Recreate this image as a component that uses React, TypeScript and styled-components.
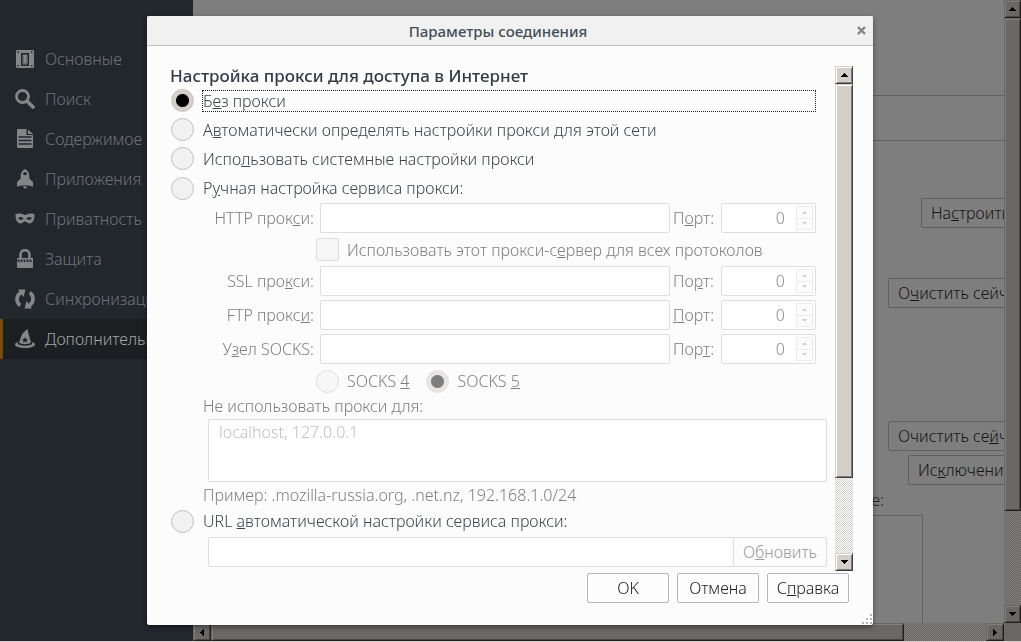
import React, { useState } from 'react';
import type { ReactNode } from 'react';
import styled, { createGlobalStyle, css } from 'styled-components';

const GlobalStyle = createGlobalStyle`
  *, *::before, *::after { box-sizing: border-box; }
  html, body, #root { height: 100%; }
  body { margin: 0; overflow: hidden; background: #d4d0c8; }
  body, button, input, textarea {
    font-family: "Noto Sans", "Open Sans", sans-serif;
    font-size: 16px;
    font-weight: 300;
    line-height: 20px;
  }
`;

/* ---------- page behind the dialog ---------- */

const Page = styled.div`
  display: grid;
  grid-template-columns: 193px minmax(0, 1fr);
  grid-template-rows: minmax(0, 1fr);
  height: 100%;
  padding-bottom: 1px;
`;

const Sidebar = styled.nav`
  padding-top: 39px;
  background: #22272e;
  overflow: hidden;
`;

const NavItem = styled.a<{ $active?: boolean }>`
  display: flex;
  align-items: center;
  gap: 10px;
  height: 40px;
  padding-left: 12px;
  border-left: 3px solid ${p => (p.$active ? '#7f4a00' : 'transparent')};
  background: ${p => (p.$active ? '#1b1f22' : 'transparent')};
  color: ${p => (p.$active ? '#a4a6a8' : '#6e7276')};
  white-space: nowrap;
  text-decoration: none;
  svg { flex: none; color: #848586; }
`;

const Workspace = styled.div`
  display: grid;
  grid-template-columns: minmax(0, 1fr) 17px;
  grid-template-rows: minmax(0, 1fr) 18px;
`;

const Viewport = styled.main`
  overflow: hidden;
  background: #7e7e7e;
`;

const Content = styled.div`
  display: flex;
  flex-direction: column;
  width: calc(100% + 22px);
`;

const TopBand = styled.div`
  height: 96px;
  border-bottom: 1px solid #626262;
`;

const TabBand = styled.div`
  height: 45px;
  border-bottom: 1px solid #626262;
`;

const ActionRow = styled.div<{ $gap: number }>`
  display: flex;
  justify-content: flex-end;
  margin-top: ${p => p.$gap}px;
`;

const PageButton = styled.button<{ $width: number }>`
  width: ${p => p.$width}px;
  height: 30px;
  padding: 0 9px;
  border: 1px solid #606060;
  border-radius: 2px;
  background: #7e7e7e;
  color: #151515;
  text-align: left;
  white-space: nowrap;
`;

const ListCaption = styled.div`
  margin: 5px 142px 5px 0;
  color: #20252a;
  text-align: right;
`;

const SiteList = styled.div`
  height: 120px;
  margin: 0 103px 0 30px;
  border: 1px solid #626262;
`;

/* ---------- scroll bars ---------- */

type Axis = 'x' | 'y';

const Bar = styled.div<{ $axis: Axis; $dim?: boolean }>`
  display: flex;
  flex-direction: ${p => (p.$axis === 'y' ? 'column' : 'row')};
  min-width: 0;
  min-height: 0;
  --face: ${p => (p.$dim ? '#6a6864' : '#d4d0c8')};
  --lite: ${p => (p.$dim ? '#7e7e7e' : '#ffffff')};
  --mid: ${p => (p.$dim ? '#484744' : '#808080')};
  --dark: ${p => (p.$dim ? '#202020' : '#404040')};
  background: repeating-conic-gradient(var(--face) 0 25%, var(--lite) 0 50%) 0 0 / 2px 2px;
`;

const raised = css`
  border: 1px solid;
  border-color: var(--face) var(--dark) var(--dark) var(--face);
  box-shadow: inset 1px 1px var(--lite), inset -1px -1px var(--mid);
  background: var(--face);
`;

const Arrow = styled.button`
  ${raised}
  display: flex;
  align-items: center;
  justify-content: center;
  flex: 0 0 18px;
  padding: 0;
  border-radius: 0;
  color: #000;
`;

const Thumb = styled.div<{ $grow: number }>`
  ${raised}
  flex: ${p => p.$grow} 1 0;
`;

const Rest = styled.div<{ $grow: number }>`
  flex: ${p => p.$grow} 1 0;
`;

const Corner = styled.div`
  background: #6a6864;
`;

const arrows = {
  up: 'M0 4h7L3.5 0z',
  down: 'M0 0h7L3.5 4z',
  left: 'M4 0v7L0 3.5z',
  right: 'M0 0v7l4-3.5z',
};

function ArrowButton({ dir, label }: { dir: keyof typeof arrows; label: string }) {
  const tall = dir === 'left' || dir === 'right';
  return (
    <Arrow type="button" aria-label={label}>
      <svg width={tall ? 4 : 7} height={tall ? 7 : 4} shapeRendering="crispEdges">
        <path d={arrows[dir]} fill="currentColor" />
      </svg>
    </Arrow>
  );
}

function ScrollBar({ axis, thumb, rest, dim }: { axis: Axis; thumb: number; rest: number; dim?: boolean }) {
  return (
    <Bar $axis={axis} $dim={dim}>
      <ArrowButton dir={axis === 'y' ? 'up' : 'left'} label="Назад" />
      <Thumb $grow={thumb} />
      <Rest $grow={rest} />
      <ArrowButton dir={axis === 'y' ? 'down' : 'right'} label="Вперёд" />
    </Bar>
  );
}

/* ---------- dialog ---------- */

const Overlay = styled.div`
  position: fixed;
  inset: 0 1px 1px 0;
  display: flex;
  align-items: center;
  justify-content: center;
`;

const Dialog = styled.section`
  position: relative;
  width: 726px;
  max-width: 100%;
  border-radius: 2px;
  background: #fcfcfc;
  box-shadow: 0 2px 5px rgba(0, 0, 0, 0.45);
  color: #3c454e;
`;

const TitleBar = styled.header`
  display: grid;
  grid-template-columns: 1fr 24px;
  align-items: center;
  height: 30px;
  border-bottom: 1px solid #c1c1c1;
  border-radius: 2px 2px 0 0;
  background: #f1f1f1;
`;

const Title = styled.h1`
  margin: 0;
  font-size: 15px;
  font-weight: 500;
  line-height: 20px;
  text-align: center;
  color: #424f5a;
`;

const CloseButton = styled.button`
  display: flex;
  align-items: center;
  justify-content: center;
  height: 24px;
  padding: 0;
  border: 0;
  background: none;
  color: #848484;
`;

const Body = styled.div`
  display: grid;
  grid-template-columns: minmax(0, 1fr) 18px;
  padding: 20px 20px 0 23px;
`;

const Form = styled.form`
  padding-right: 19px;
`;

const Heading = styled.h2`
  margin: 0;
  font-size: 17px;
  font-weight: 500;
  line-height: 20px;
  color: #333c45;
`;

const Option = styled.label<{ $height?: number }>`
  display: flex;
  align-items: center;
  height: ${p => p.$height ?? 29}px;
`;

const OptionText = styled.span<{ $focused?: boolean }>`
  flex: 1;
  margin-left: 8px;
  border: 1px dotted ${p => (p.$focused ? '#222' : 'transparent')};
`;

const Radio = styled.input.attrs({ type: 'radio' })`
  appearance: none;
  flex: none;
  width: 23px;
  height: 23px;
  margin: 0 0 0 1px;
  border: 1px solid #c0c0c0;
  border-radius: 50%;
  background: #f1f1f1;
  &:checked {
    border-color: #c6c4be;
    background: radial-gradient(circle, #000 0 6px, #d4d0c8 7px);
  }
  &:disabled { opacity: 0.5; }
`;

const Check = styled.input.attrs({ type: 'checkbox' })`
  appearance: none;
  flex: none;
  width: 23px;
  height: 23px;
  margin: 0;
  border: 1px solid #dedede;
  border-radius: 2px;
  background: #f6f6f6;
`;

const ProxyRow = styled.div`
  display: grid;
  grid-template-columns: 144px minmax(0, 1fr) 39px 95px;
  column-gap: 6px;
  align-items: center;
  margin-bottom: 4px;
  color: #7f7f7f;
`;

const HostLabel = styled.label`
  text-align: right;
  white-space: nowrap;
`;

const PortLabel = styled.label`
  margin-left: -3px;
  white-space: nowrap;
`;

const TextBox = styled.input.attrs({ type: 'text' })`
  width: 100%;
  min-width: 0;
  height: 30px;
  padding: 0 10px;
  border: 1px solid #dedede;
  border-radius: 2px;
  background: #fefefe;
  color: #8f8f8f;
`;

const Spinner = styled.span`
  display: flex;
  align-items: center;
  height: 30px;
  padding-right: 2px;
  border: 1px solid #dedede;
  border-radius: 2px;
  background: #fefefe;
`;

const PortInput = styled.input.attrs({ type: 'text', inputMode: 'numeric' })`
  flex: 1;
  min-width: 0;
  padding: 0 11px 0 0;
  border: 0;
  background: none;
  color: #8f8f8f;
  text-align: right;
`;

const Steps = styled.span`
  display: grid;
  width: 17px;
  height: 24px;
  border: 1px solid #ececec;
`;

const Step = styled.button`
  display: flex;
  align-items: center;
  justify-content: center;
  padding: 0;
  border: 0;
  background: #fcfcfc;
  color: #d0d0d0;
  & + & { border-top: 1px solid #ececec; }
`;

const SharedRow = styled.label`
  display: flex;
  align-items: center;
  gap: 8px;
  height: 25px;
  margin: 0 0 4px 146px;
  color: #7f7f7f;
`;

const SocksRow = styled.div`
  display: flex;
  gap: 16px;
  height: 26px;
  margin-left: 145px;
  padding-top: 1px;
  color: #7f7f7f;
`;

const SocksOption = styled.label`
  display: flex;
  align-items: center;
  gap: 8px;
  height: 24px;
`;

const Caption = styled.label`
  display: block;
  margin: 2px 0 3px 33px;
  color: #7f7f7f;
`;

const Example = styled.p`
  margin: 3px 0 1px 33px;
  color: #7f7f7f;
`;

const ExceptionsBox = styled.div`
  margin: 0 -11px 0 38px;
`;

const Exceptions = styled.textarea`
  display: block;
  width: 100%;
  height: 63px;
  padding: 2px 10px;
  border: 1px solid #dedede;
  border-radius: 2px;
  background: #fefefe;
  color: #3c454e;
  resize: none;
  &::placeholder { color: #c0c0c0; opacity: 1; }
`;

const UrlRow = styled.div`
  display: flex;
  margin: 1px -11px 4px 38px;
`;

const ReloadButton = styled.button`
  flex: 0 0 94px;
  height: 30px;
  margin-left: -1px;
  padding: 0;
  border: 1px solid #dedede;
  border-radius: 0 2px 2px 0;
  background: #fcfcfc;
  color: #9a9a9a;
`;

const Footer = styled.footer`
  display: flex;
  justify-content: flex-end;
  gap: 8px;
  padding: 2px 24px 22px;
`;

const DialogButton = styled.button`
  width: 82px;
  height: 30px;
  padding: 0;
  border: 1px solid #b8b8b8;
  border-radius: 2px;
  background: #fdfdfd;
  color: #222;
`;

const Grip = styled.svg`
  position: absolute;
  right: 0;
  bottom: 0;
`;

/* ---------- icons ---------- */

function NavIcon({ children }: { children: ReactNode }) {
  return (
    <svg width="20" height="20" viewBox="0 0 20 20" fill="currentColor" aria-hidden="true">
      {children}
    </svg>
  );
}

const GeneralIcon = () => (
  <NavIcon>
    <rect x="1" y="1" width="18" height="18" rx="1" />
    <path d="M2.500 2.500H4V4H2.500zM16 2.500h1.500V4H16zM2.500 16H4v1.500H2.500zM16 16h1.500v1.500H16z" fill="#22272e" />
    <path d="M6.700 4.700h6.600v11.600H6.700z" fill="#6a6c6e" stroke="#22272e" strokeWidth="1.400" />
    <path d="M9 6h2.500v8H9z" />
  </NavIcon>
);
const SearchIcon = () => (
  <NavIcon>
    <circle cx="7.500" cy="7.500" r="6" fill="none" stroke="currentColor" strokeWidth="2.800" />
    <path d="M12 12l6 6" stroke="currentColor" strokeWidth="3.800" strokeLinecap="round" />
  </NavIcon>
);
const ContentIcon = () => (
  <NavIcon>
    <path d="M3 0h8.500v6H18v12a1 1 0 0 1-1 1H3a1 1 0 0 1-1-1V1a1 1 0 0 1 1-1z" />
    <path d="M13 .5l5 4.500h-5z" />
    <path d="M3.500 8h13M3.500 11.500h13M3.500 15h13" stroke="#22272e" strokeWidth="1.300" />
  </NavIcon>
);
const AppsIcon = () => (
  <NavIcon>
    <path
      fillRule="evenodd"
      d="M10 0c3 1.300 4.300 4 4.300 7.500v2L18 13v4.800L14 16.500H6L2 17.800V13l3.700-3.500v-2C5.700 4 7 1.300 10 0zM10 3a2 2.600 0 0 0-2 2.600 4 4 0 0 0 4 0A2 2.600 0 0 0 10 3z"
    />
    <path d="M7.500 17.500h5L10 20z" />
  </NavIcon>
);
const PrivacyIcon = () => (
  <NavIcon>
    <path
      fillRule="evenodd"
      d="M0.500 5C4 4 7 4.500 10 6c3-1.500 6-2 9.500-1 .3 5-1.500 9.500-5 9.500-2 0-3-2-4.500-2s-2.500 2-4.500 2C2 14.500.2 10 .5 5zM3.200 9.300c1.300 1.800 3.700 2.200 5.300.4C7.200 7.600 4.700 7.500 3.200 9.300zM16.800 9.300c-1.500-1.800-4-1.700-5.300.4 1.600 1.800 4 1.400 5.300-.4z"
    />
  </NavIcon>
);
const SecurityIcon = () => (
  <NavIcon>
    <path d="M5.500 9.500V5.700a4.500 4.500 0 0 1 9 0v3.800" fill="none" stroke="currentColor" strokeWidth="2.600" />
    <path d="M2 9h16v9a1 1 0 0 1-1 1H3a1 1 0 0 1-1-1z" />
    <path
      d="M2.500 10.500l2 2.500M5.500 10.500l2 2.500M8.500 10.500l2 2.500M11.500 10.500l2 2.500M14.500 10.500l2 2.500"
      stroke="#22272e"
      strokeWidth="1.400"
    />
  </NavIcon>
);
const SyncIcon = () => (
  <NavIcon>
    <path
      d="M7.500 3C4 4.200 2 7 2 10.300c0 2.700 1.300 4.700 3.200 6.200M12.500 17c3.500-1.200 5.500-4 5.500-7.300 0-2.700-1.300-4.700-3.200-6.200"
      fill="none"
      stroke="currentColor"
      strokeWidth="3.800"
    />
    <path d="M3 .5h7.500L8.500 8zM17 19.500H9.500l2-7.500z" />
  </NavIcon>
);
const AdvancedIcon = () => (
  <NavIcon>
    <path
      fillRule="evenodd"
      d="M13 0c-.7 1.800.2 3 .7 5L16 13.500c-2.500 2.200-9.500 2.200-12 0L6.500 6.500C7.500 4.500 10 1.500 13 0zM10 8l-.9 2-2.100.2 1.600 1.400-.5 2.100 1.900-1.100 1.900 1.100-.5-2.100 1.600-1.400-2.100-.2z"
    />
    <path d="M3 13C1.200 13.500 0 14.300 0 15.500 0 17.700 4.500 19 10 19s10-1.300 10-3.500c0-1.200-1.200-2-3-2.500l.3 2c-3 2.300-11.600 2.300-14.600 0z" />
  </NavIcon>
);

const sections: { name: string; icon: ReactNode; active?: boolean }[] = [
  { name: 'Основные', icon: <GeneralIcon /> },
  { name: 'Поиск', icon: <SearchIcon /> },
  { name: 'Содержимое', icon: <ContentIcon /> },
  { name: 'Приложения', icon: <AppsIcon /> },
  { name: 'Приватность', icon: <PrivacyIcon /> },
  { name: 'Защита', icon: <SecurityIcon /> },
  { name: 'Синхронизация', icon: <SyncIcon /> },
  { name: 'Дополнительные', icon: <AdvancedIcon />, active: true },
];

/* ---------- form parts ---------- */

function ProxyFields({ id, label, portLabel }: { id: string; label: ReactNode; portLabel: ReactNode }) {
  return (
    <ProxyRow>
      <HostLabel htmlFor={id}>{label}</HostLabel>
      <TextBox id={id} disabled />
      <PortLabel htmlFor={`${id}-port`}>{portLabel}</PortLabel>
      <Spinner>
        <PortInput id={`${id}-port`} defaultValue="0" disabled />
        <Steps>
          <Step type="button" aria-label="Больше" disabled>
            <svg width="5" height="3"><path d="M0 3h5L2.500 0z" fill="currentColor" /></svg>
          </Step>
          <Step type="button" aria-label="Меньше" disabled>
            <svg width="5" height="3"><path d="M0 0h5L2.500 3z" fill="currentColor" /></svg>
          </Step>
        </Steps>
      </Spinner>
    </ProxyRow>
  );
}

export default function App() {
  const [mode, setMode] = useState('none');

  const modeOption = (value: string, text: ReactNode, height?: number) => (
    <Option $height={height}>
      <Radio name="mode" checked={mode === value} onChange={() => setMode(value)} />
      <OptionText $focused={mode === value}>{text}</OptionText>
    </Option>
  );

  return (
    <>
      <GlobalStyle />
      <Page>
        <Sidebar>
          {sections.map(s => (
            <NavItem key={s.name} href="#" $active={s.active}>
              {s.icon}
              {s.name}
            </NavItem>
          ))}
        </Sidebar>
        <Workspace>
          <Viewport>
            <Content>
              <TopBand />
              <TabBand />
              <ActionRow $gap={57}>
                <PageButton $width={105}>На<u>с</u>троить…</PageButton>
              </ActionRow>
              <ActionRow $gap={50}>
                <PageButton $width={138}>О<u>ч</u>истить сейчас</PageButton>
              </ActionRow>
              <ActionRow $gap={113}>
                <PageButton $width={138}>Очистить се<u>й</u>час</PageButton>
              </ActionRow>
              <ActionRow $gap={4}>
                <PageButton $width={118}>Ис<u>к</u>лючения…</PageButton>
              </ActionRow>
              <ListCaption>использование:</ListCaption>
              <SiteList />
            </Content>
          </Viewport>
          <ScrollBar axis="y" thumb={493} rest={94} dim />
          <ScrollBar axis="x" thumb={693} rest={82} dim />
          <Corner />
        </Workspace>
      </Page>

      <Overlay>
        <Dialog role="dialog" aria-labelledby="dialog-title">
          <TitleBar>
            <Title id="dialog-title">Параметры соединения</Title>
            <CloseButton type="button" aria-label="Закрыть">
              <svg width="9" height="9" viewBox="0 0 9 9">
                <path d="M1 1l7 7M8 1L1 8" stroke="currentColor" strokeWidth="2.400" />
              </svg>
            </CloseButton>
          </TitleBar>

          <Body>
            <Form>
              <Heading>Настройка прокси для доступа в Интернет</Heading>
              {modeOption('none', <>Б<u>е</u>з прокси</>)}
              {modeOption('detect', <>А<u>в</u>томатически определять настройки прокси для этой сети</>)}
              {modeOption('system', <>Испо<u>л</u>ьзовать системные настройки прокси</>)}
              {modeOption('manual', <>Р<u>у</u>чная настройка сервиса прокси:</>, 30)}

              <ProxyFields id="http" label={<>HTTP прок<u>с</u>и:</>} portLabel={<>П<u>о</u>рт:</>} />
              <SharedRow>
                <Check disabled />
                <span>Использовать этот прокси-с<u>е</u>рвер для всех протоколов</span>
              </SharedRow>
              <ProxyFields id="ssl" label={<>SSL про<u>к</u>си:</>} portLabel={<>По<u>р</u>т:</>} />
              <ProxyFields id="ftp" label={<>FTP прокс<u>и</u>:</>} portLabel={<><u>П</u>орт:</>} />
              <ProxyFields id="socks" label={<>У<u>з</u>ел SOCKS:</>} portLabel={<>Пор<u>т</u>:</>} />

              <SocksRow>
                <SocksOption>
                  <Radio name="socks-version" disabled />
                  <span>SOCKS <u>4</u></span>
                </SocksOption>
                <SocksOption>
                  <Radio name="socks-version" defaultChecked disabled />
                  <span>SOCKS <u>5</u></span>
                </SocksOption>
              </SocksRow>

              <Caption htmlFor="exceptions">Не использовать прокси <u>д</u>ля:</Caption>
              <ExceptionsBox>
                <Exceptions id="exceptions" placeholder="localhost, 127.0.0.1" disabled />
              </ExceptionsBox>
              <Example>Пример: .mozilla-russia.org, .net.nz, 192.168.1.0/24</Example>

              {modeOption('url', <>URL <u>а</u>втоматической настройки сервиса прокси:</>, 30)}
              <UrlRow>
                <TextBox aria-label="URL" disabled />
                <ReloadButton type="button" disabled>О<u>б</u>новить</ReloadButton>
              </UrlRow>
            </Form>
            <ScrollBar axis="y" thumb={394} rest={75} />
          </Body>

          <Footer>
            <DialogButton type="button">OK</DialogButton>
            <DialogButton type="button">Отмена</DialogButton>
            <DialogButton type="button">С<u>п</u>равка</DialogButton>
          </Footer>

          <Grip width="12" height="12" fill="#b4b4b4" aria-hidden="true">
            <path d="M9 1h2v2H9zM9 5h2v2H9zM5 5h2v2H5zM9 9h2v2H9zM5 9h2v2H5zM1 9h2v2H1z" />
          </Grip>
        </Dialog>
      </Overlay>
    </>
  );
}
